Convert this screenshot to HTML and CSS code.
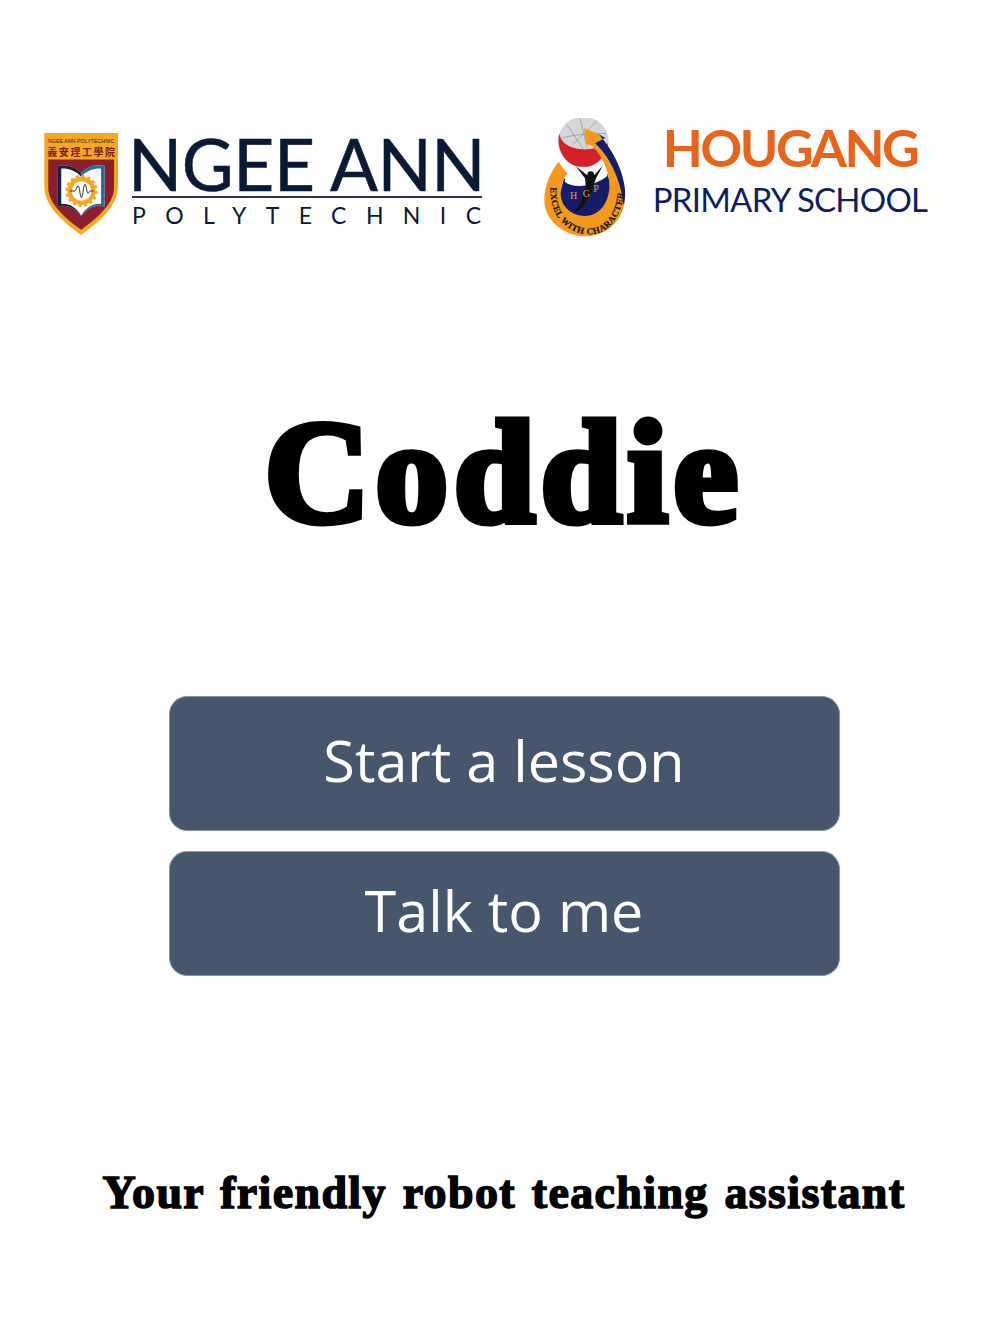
FILE: index.html
```html
<!DOCTYPE html>
<html lang="en">
<head>
    <meta charset="UTF-8">
    <meta name="viewport" content="width=device-width, initial-scale=1.0">
    <title>Coddie</title>
    <link rel="stylesheet" href="styles.css">
</head>
<body>
    <div class="page">
        <header class="logos">
            <div class="logo-np">
                <svg class="np-crest" viewBox="42 38 226 312" aria-hidden="true">
                    <path d="M43 40H265V200C265 270 190 320 154 348C118 320 43 270 43 200Z" fill="#f5a623"/>
                    <path d="M55 120H253V205C253 258 192 303 154 332C116 303 55 258 55 205Z" fill="#8c1f2d"/>
                    <text x="154" y="70" class="crest-name" textLength="200" lengthAdjust="spacingAndGlyphs">NGEE ANN POLYTECHNIC</text>
                    <text x="154" y="110" class="crest-cn" textLength="204">義安理工學院</text>
                    <path d="M84 140C110 132 135 142 154 160C173 142 198 132 224 140V262C198 254 173 266 154 290C135 266 110 254 84 262Z" fill="#fff"/>
                    <path d="M84 140C110 132 135 142 154 160V172C135 152 110 146 94 148V254C115 252 138 262 154 290C135 266 110 254 84 262Z" fill="#14233f"/>
                    <path d="M224 140C198 132 173 142 154 160V172C173 152 198 146 214 148V254C193 252 170 262 154 290C173 266 198 254 224 262Z" fill="#1f6ea5"/>
                    <circle cx="155" cy="215" r="36" fill="none" stroke="#f5a623" stroke-width="13"/>
                    <circle cx="155" cy="215" r="45" fill="none" stroke="#f5a623" stroke-width="7" stroke-dasharray="9 8.6"/>
                    <path d="M120 215H135C139 215 140 200 145 200C150 200 150 235 155 235C160 235 160 195 165 195C170 195 170 222 175 222C178 222 178 215 182 215H192" fill="none" stroke="#3a2a20" stroke-width="3"/>
                </svg>
                <div class="np-type">
                    <div class="np-name">NGEE ANN</div>
                    <div class="np-sub">POLYTECHNIC</div>
                </div>
            </div>
            <div class="logo-hg">
                <svg class="hg-crest" viewBox="42 24 249 360" aria-hidden="true">
                    <defs>
                        <path id="hg-motto" d="M62 232C56 322 118 374 178 373C238 372 282 315 281 230"/>
                    </defs>
                    <circle cx="160" cy="96" r="76" fill="#d4d6d8"/>
                    <path d="M88 70C92 104 130 120 170 118C200 116 225 108 234 100C232 135 200 172 160 172C110 172 76 120 88 70Z" fill="#d5202a"/>
                    <path d="M112 46L160 118M150 22L172 116M200 34L128 104M92 84C130 76 190 66 230 72" fill="none" stroke="#8d9096" stroke-width="2"/>
                    <path d="M100 165L120 190L140 170L220 170L245 240C240 290 205 325 165 325C120 325 90 290 92 250Z" fill="#fff"/>
                    <path d="M102 205C130 228 190 218 232 192L248 240C235 295 205 325 165 325C120 325 88 290 90 250Z" fill="#151d6b"/>
                    <path d="M108 200C140 222 190 212 226 184L232 198C195 228 135 238 104 215Z" fill="#fff"/>
                    <path d="M85 155C60 190 38 235 44 285C56 350 125 385 180 378C250 370 292 310 285 240C280 180 245 115 205 72L162 54L168 102L188 108C225 150 240 195 238 235C234 285 205 318 165 318C125 318 92 290 92 250C92 225 100 205 112 192Z" fill="#f39a1e"/>
                    <path d="M205 72C245 115 280 180 285 240C286 255 285 270 281 285C275 230 250 150 195 100L226 84Z" fill="#151d6b"/>
                    <circle cx="182" cy="194" r="10" fill="#111"/>
                    <path d="M137 168L165 205L168 235L150 280L130 312L160 290L184 245L198 205L218 168L192 196H172Z" fill="#111"/>
                    <text class="hg-letters" x="120" y="268">H</text>
                    <text class="hg-letters" x="158" y="262">G</text>
                    <text class="hg-letters" x="190" y="246">P</text>
                    <text class="hg-motto"><textPath href="#hg-motto">EXCEL WITH CHARACTER</textPath></text>
                </svg>
                <div class="hg-type">
                    <div class="hg-name">HOUGANG</div>
                    <div class="hg-sub">PRIMARY SCHOOL</div>
                </div>
            </div>
        </header>

        <h1 class="title">Coddie</h1>

        <nav class="actions">
            <button class="action action-tall">Start a lesson</button>
            <button class="action">Talk to me</button>
        </nav>

        <p class="tagline">Your friendly robot teaching assistant</p>
    </div>
</body>
</html>
```

FILE: styles.css
```css
body {
    margin: 0;
    background: white;
    font-family: "Open Sans", sans-serif;
}

.page {
    width: 1008px;
    height: 1344px;
    overflow: hidden;
    display: flex;
    flex-direction: column;
    align-items: center;
}

/* logos */
.logos {
    align-self: stretch;
    height: 120px;
    margin-top: 118px;
    padding-left: 44px;
    display: flex;
    align-items: flex-start;
}

.logo-np {
    display: flex;
    width: 500px;
    padding-top: 14px;
}

.np-crest {
    width: 75px;
    height: 104px;
    flex: none;
}

.np-type {
    width: 350px;
    margin-left: 13px;
    color: #0b1a33;
    font-family: Lato, sans-serif;
}

.np-name {
    height: 64px;
    border-bottom: 2px solid #2a3550;
    font-size: 71px;
    line-height: 64px;
    letter-spacing: -0.4px;
    text-indent: -4px;
    white-space: nowrap;
    -webkit-text-stroke: 0.6px #0b1a33;
}

.np-sub {
    margin-top: 4px;
    font-size: 23px;
    line-height: 26px;
    letter-spacing: 19.4px;
    white-space: nowrap;
}

.crest-name {
    font-family: "Liberation Sans", sans-serif;
    font-size: 17px;
    fill: #222;
    text-anchor: middle;
}

.crest-cn {
    font-family: "Noto Sans CJK TC", sans-serif;
    font-size: 30px;
    font-weight: 700;
    fill: #7a1d1d;
    text-anchor: middle;
}

.logo-hg {
    display: flex;
}

.hg-crest {
    width: 83px;
    height: 120px;
    flex: none;
}

.hg-type {
    margin-left: 25px;
    width: 276px;
    font-family: Lato, sans-serif;
    text-align: center;
}

.hg-name {
    color: #e8641b;
    font-size: 52px;
    font-weight: 700;
    line-height: 58px;
    letter-spacing: -2.5px;
    white-space: nowrap;
}

.hg-sub {
    margin-top: 1px;
    color: #0f1f5c;
    font-size: 33px;
    line-height: 44px;
    letter-spacing: -0.75px;
    white-space: nowrap;
}

.hg-letters {
    font-family: "Liberation Serif", serif;
    font-size: 30px;
    fill: #f39a1e;
}

.hg-motto {
    font-family: "Liberation Serif", serif;
    font-size: 27px;
    font-weight: 700;
    letter-spacing: 1.5px;
    fill: #111;
    stroke: #111;
    stroke-width: 0.6px;
}

/* title */
.title {
    margin: 145px 0 0;
    font-family: "Liberation Serif", serif;
    font-size: 146px;
    font-weight: 700;
    line-height: 180px;
    letter-spacing: 5.5px;
    color: black;
    -webkit-text-stroke: 7px black;
}

/* buttons */
.actions {
    margin-top: 133px;
    width: 671px;
    display: flex;
    flex-direction: column;
    gap: 20px;
}

.action {
    height: 125px;
    padding: 0 0 8px;
    background: #46566d;
    color: white;
    border: 1px solid #8a96a8;
    border-radius: 18px;
    font-family: "Open Sans", sans-serif;
    font-size: 57.5px;
    cursor: pointer;
}

.action-tall {
    height: 135px;
}

/* tagline */
.tagline {
    margin: 190px 0 0;
    font-family: "Liberation Serif", serif;
    font-size: 46px;
    font-weight: 700;
    line-height: 54px;
    letter-spacing: 1.35px;
    word-spacing: 3px;
    white-space: nowrap;
    -webkit-text-stroke: 1.5px black;
}
```
